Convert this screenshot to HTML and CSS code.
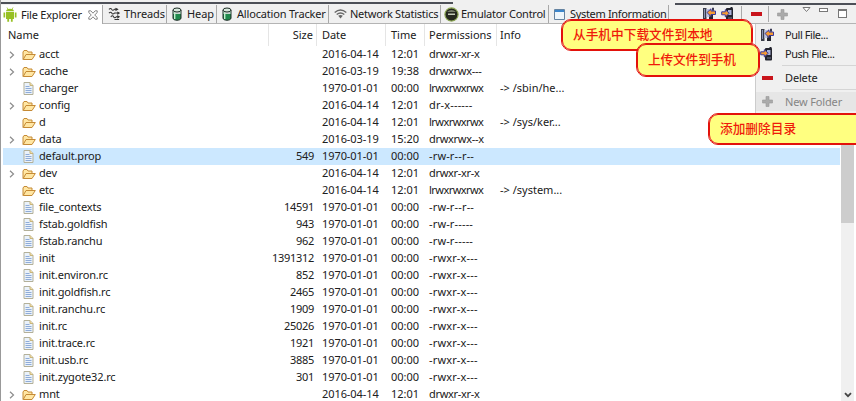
FILE: index.html
```
<!DOCTYPE html>
<html lang="zh-CN">
<head>
<meta charset="utf-8">
<title>File Explorer</title>
<link rel="stylesheet" href="styles.css">
</head>
<body>
<svg class="defs" width="0" height="0">
  <symbol id="folder" viewBox="0 0 14 12"><path d="M1 10.500V3l1-1.500h3L6 3h4v2.500M1.200 10.500 4 5.500h9.300L10 10.500z" fill="#ffe6a3" stroke="#c58a35"/></symbol>
  <symbol id="file" viewBox="0 0 11 13"><path d="M1 .5h6l3 3v9H1z" fill="#eaf2fb" stroke="#b3b099"/><path d="M7 .5v3h3" fill="#f4dfa5" stroke="#c7b47b"/><path d="M2.500 4.500h4M2.500 6.500h6M2.500 8.500h6M2.500 10.500h6" stroke="#8facd8"/></symbol>
  <symbol id="chev" viewBox="0 0 6 8"><path d="M1 .8 4.500 4 1 7.200" fill="none" stroke="#8c8c8c" stroke-width="1.200"/></symbol>
  <symbol id="heap" viewBox="0 0 10 14"><path d="M1 3v8c0 3 8 3 8 0V3z" fill="#1f8a4c" stroke="#1c2b24"/><path d="M1.500 4v3h7V4z" fill="#c9d6cf"/><path d="M2.700 4v8" stroke="#c5f0d0" stroke-width="1.400"/><ellipse cx="5" cy="3" rx="4" ry="2" fill="#d6e8dc" stroke="#1c2b24"/></symbol>
  <symbol id="pull" viewBox="0 0 15 14"><path d="M1 1h3.500v12H1z" fill="#3a3d4a"/><path d="M7 5h4v8H7z" fill="#23242e"/><path d="M4.500 2h3v8h-3z" fill="#bcc4e6"/><path d="M2.500 2v9" stroke="#8b93b5"/><path d="M10 .8h2v3h-2z" fill="#3b3b55"/><path d="M5 5.500 9 1.800v2.200h4.500v3.500H9v2z" fill="#f59b32" stroke="#3c3a9b"/></symbol>
  <symbol id="push" viewBox="0 0 13 14"><rect x="5" y="1" width="7" height="12.500" rx="1" fill="#23242e"/><path d="M10.500 0v3" stroke="#23242e" stroke-width="2"/><path d="M7 3h3.500v5H7z" fill="#aab2d9"/><path d="M7 11h4" stroke="#777b93"/><path d="M.7 4.800h3.600V2.600L8.300 6.300l-4 3.700V7.800H.7z" fill="#f59b32" stroke="#3c3a9b"/></symbol>
  <symbol id="plus" viewBox="0 0 11 11"><path d="M4 .5h3V4h3.500v3H7v3.500H4V7H.5V4H4z" fill="#aaa" stroke="#999" stroke-width=".6"/></symbol>
</svg>
<div class="window">
  <div class="topedge"><i></i><i></i></div>
  <div class="tabbar">
    <div class="tab active t1"><svg class="android" viewBox="0 0 14 15"><path d="M3 5h8v7H3zM3 4.300C3 1 11 1 11 4.300zM.5 5.500h1.700v5H.5zM11.800 5.500h1.700v5h-1.700zM4.300 12h1.800v2.800H4.300zM7.900 12h1.800v2.800H7.900z" fill="#97c024"/><path d="M4 .5 5.200 2.500M10 .5 8.800 2.500" stroke="#97c024" stroke-width=".8"/></svg><span>File Explorer</span><svg class="close" viewBox="0 0 10 10"><path d="M.8.800h2L5 3.200 7.200.800h2v1.800L6.700 5l2.500 2.400v1.800h-2L5 6.800 2.800 9.200h-2V7.400L3.300 5 .8 2.600z" fill="#fff" stroke="#777" stroke-width=".9"/></svg></div>
    <div class="tab t2"><svg class="threads" viewBox="0 0 14 14"><path d="M1 2q2-2 3 0t3 0h3M1 6q2-2 3 0t3 0h5M3 10q2-2 3 0t3 0h3M7 13h5" fill="none" stroke="#333" stroke-width="1.100"/><path d="M8 .2 11.500 2 8 4zM10 4.200 13 6l-3 2zM10 8.200l3 1.800-3 2z" fill="#333"/></svg><span>Threads</span></div>
    <div class="tab t3"><svg class="heap"><use href="#heap"/></svg><span>Heap</span></div>
    <div class="tab t4"><svg class="heap"><use href="#heap"/></svg><span>Allocation Tracker</span></div>
    <div class="tab t5"><svg class="wifi" viewBox="0 0 13 10"><path d="M.7 3.500Q6.500-1.500 12.300 3.500M2.700 5.500q3.800-3.200 7.600 0" fill="none" stroke="#666" stroke-width="1.400"/><path d="M4.200 6.800Q6.500 5 8.800 6.800L6.500 9.500z" fill="#666"/></svg><span>Network Statistics</span></div>
    <div class="tab t6"><svg class="emu" viewBox="0 0 15 15"><circle cx="7.500" cy="7.500" r="6.600" fill="#25281f" stroke="#8ca653" stroke-width="1.200"/><path d="M3 5q4.500-4 9 0z" fill="#777d6c"/><path d="M4 6.500h7v1.500H4z" fill="#c5cbb9"/></svg><span>Emulator Control</span></div>
    <div class="tab t7"><svg class="sys" viewBox="0 0 11 11"><path d="M.5.5h10v10H.5z" fill="#eef6fc" stroke="#6583a0"/><path d="M1 1h9v2H1z" fill="#3c86cc"/></svg><span>System Information</span></div>
    <div class="tools">
      <svg class="pull"><use href="#pull"/></svg><svg class="push"><use href="#push"/></svg><i class="sep"></i><i class="minus"></i><i class="sep"></i><svg class="plus"><use href="#plus"/></svg>
      <svg class="wintri" viewBox="0 0 9 6"><path d="M1 .5h7L4.500 4.500z" fill="#fff" stroke="#777"/></svg><i class="winmin"></i><i class="winmax"></i>
    </div>
  </div>
  <div class="body">
    <div class="table" id="table">
      <div class="row head"><span class="name">Name</span><span class="size">Size</span><span class="date">Date</span><span class="time">Time</span><span class="perm">Permissions</span><span class="info">Info</span></div>
    </div>
    <div class="scroll"><i class="thumb"></i><svg class="down" viewBox="0 0 8 6"><path d="M1 1.200 4 4.200l3-3" fill="none" stroke="#444" stroke-width="1.800"/></svg></div>
  </div>
</div>
<div class="menu">
  <div class="item tight"><svg class="pull"><use href="#pull"/></svg><span>Pull File...</span></div>
  <div class="item tight"><svg class="push"><use href="#push"/></svg><span>Push File...</span></div>
  <hr>
  <div class="item del"><i class="minus"></i><span>Delete</span></div>
  <hr>
  <div class="item disabled"><svg class="plus"><use href="#plus"/></svg><span>New Folder</span></div>
</div>
<div class="note n1">从手机中下载文件到本地</div>
<div class="note n2">上传文件到手机</div>
<div class="note n3">添加删除目录</div>
<script src="rows.js"></script>
</body>
</html>
```
FILE: rows.js
```
const A = "2016-04-14", B = "2016-03-19", C = "1970-01-01";
// kind: "D" expandable folder, "d" plain folder, "f" file
const rows = [
  ["D", "acct", "", A, "12:01", "drwxr-xr-x", ""],
  ["D", "cache", "", B, "19:38", "drwxrwx---", ""],
  ["f", "charger", "", C, "00:00", "lrwxrwxrwx", "-> /sbin/he..."],
  ["D", "config", "", A, "12:01", "dr-x------", ""],
  ["d", "d", "", A, "12:01", "lrwxrwxrwx", "-> /sys/ker..."],
  ["D", "data", "", B, "15:20", "drwxrwx--x", ""],
  ["f", "default.prop", "549", C, "00:00", "-rw-r--r--", ""],
  ["D", "dev", "", A, "12:01", "drwxr-xr-x", ""],
  ["d", "etc", "", A, "12:01", "lrwxrwxrwx", "-> /system..."],
  ["f", "file_contexts", "14591", C, "00:00", "-rw-r--r--", ""],
  ["f", "fstab.goldfish", "943", C, "00:00", "-rw-r-----", ""],
  ["f", "fstab.ranchu", "962", C, "00:00", "-rw-r-----", ""],
  ["f", "init", "1391312", C, "00:00", "-rwxr-x---", ""],
  ["f", "init.environ.rc", "852", C, "00:00", "-rwxr-x---", ""],
  ["f", "init.goldfish.rc", "2465", C, "00:00", "-rwxr-x---", ""],
  ["f", "init.ranchu.rc", "1909", C, "00:00", "-rwxr-x---", ""],
  ["f", "init.rc", "25026", C, "00:00", "-rwxr-x---", ""],
  ["f", "init.trace.rc", "1921", C, "00:00", "-rwxr-x---", ""],
  ["f", "init.usb.rc", "3885", C, "00:00", "-rwxr-x---", ""],
  ["f", "init.zygote32.rc", "301", C, "00:00", "-rwxr-x---", ""],
  ["D", "mnt", "", A, "12:01", "drwxr-xr-x", ""]
];
const table = document.getElementById("table");
for (const [kind, name, size, date, time, perm, info] of rows) {
  const row = document.createElement("div");
  row.className = "row" + (name === "default.prop" ? " selected" : "");
  const chev = kind === "D" ? '<svg class="chev"><use href="#chev"/></svg>' : "";
  const icon = kind === "f" ? "file" : "folder";
  const type = perm[0] === "l" ? "link" : perm.startsWith("drwx") ? "dir" : "plain";
  row.innerHTML = `<span class="name"><b class="twisty">${chev}</b><b class="icon"><svg class="${icon}"><use href="#${icon}"/></svg></b><span class="label">${name}</span></span>` +
    `<span class="size">${size}</span><span class="date">${date}</span><span class="time">${time}</span><span class="perm ${type}">${perm}</span><span class="info">${info.replace(">", "&gt;")}</span>`;
  table.append(row);
}
```
FILE: styles.css
```
* { box-sizing: border-box; }
body { margin: 0; width: 856px; height: 401px; overflow: hidden; position: relative; background: #fff; color: #202020; font: 11px/16px "Noto Sans", "Noto Sans CJK SC", sans-serif; }
svg { display: block; flex: none; }
.defs { position: absolute; }
.window { height: 401px; display: flex; flex-direction: column; border-left: 1px solid #999; }
.topedge { height: 5px; flex: none; background: #f0f0f0; display: flex; justify-content: space-between; padding-top: 2px; }
.topedge i { height: 2px; background: #4c4f57; width: 452px; }
.topedge i + i { width: 181px; margin-top: 1px; }
.tabbar { height: 19px; flex: none; display: flex; background: #f0f0f0; border-bottom: 1px solid #b4b4b4; }
.tab { display: flex; align-items: center; flex: none; border-right: 1px solid #a8a8a8; white-space: nowrap; height: 18px; padding-left: 5px; letter-spacing: -.1px; }
.tab span { line-height: 18px; height: 18px; }
.active { background: #fff; height: 19px; }
.t1 { width: 102px; padding-left: 2px; letter-spacing: -.22px; } .t2 { width: 64px; } .t3 { width: 50px; } .t4 { width: 112px; letter-spacing: -.18px; } .t5 { width: 112px; letter-spacing: -.25px; } .t6 { width: 108px; padding-left: 3px; letter-spacing: -.25px; } .t7 { width: 120px; letter-spacing: -.33px; }
.android { width: 14px; height: 15px; margin-right: 4px; }
.close { width: 10px; height: 10px; margin-left: 6px; }
.threads { width: 13px; height: 14px; margin-right: 3px; }
.heap { width: 10px; height: 14px; margin-right: 5px; }
.wifi { width: 13px; height: 10px; margin-right: 3px; }
.emu { width: 15px; height: 15px; margin-right: 2px; }
.sys { width: 11px; height: 11px; margin-right: 5px; }
.tools { flex: 1; display: flex; align-items: center; padding-left: 33px; }
.pull { width: 15px; height: 14px; } .push { width: 13px; height: 14px; }
.tools .push { margin-left: 4px; }
.sep { width: 1px; height: 16px; background: #aaa; margin-left: 7px; }
.minus { width: 11px; height: 4px; background: #c9141b; flex: none; }
.tools .minus { margin: 0 0 0 9px; }
.tools .minus + .sep { margin-left: 6px; }
.plus { width: 11px; height: 11px; } .tools .plus { margin-left: 8px; }
.wintri { width: 9px; height: 6px; margin: -8px 0 0 14px; }
.winmin { width: 9px; height: 4px; border: 1px solid #777; background: #fff; margin: -8px 0 0 8px; }
.winmax { width: 9px; height: 9px; border: 1px solid #777; border-top-width: 2px; background: #fff; margin: -1px 0 0 10px; }
.body { flex: 1; min-height: 0; display: flex; }
.table { flex: 1; overflow: hidden; }
.row { display: grid; grid-template-columns: 266px 48px 69px 39px 72px 1fr; height: 17px; margin: 0 1px 0 2px; white-space: nowrap; }
.row > span { height: 17px; }
.head { height: 22px; line-height: 22px; }
.head > span { height: 22px; border-right: 1px solid #e5e5e5; }
.head .info { border-right: 0; }
.head .name { padding-left: 5px; }
.head .size { letter-spacing: 0; }
.selected { background: #cce8ff; }
.name { display: flex; align-items: center; }
.label { height: 17px; letter-spacing: -.15px; }
.twisty { width: 19px; padding-left: 6px; } .chev { width: 6px; height: 8px; }
.icon { width: 17px; display: flex; }
.folder { width: 14px; height: 12px; } .file { width: 11px; height: 13px; margin-left: 1px; }
.size { text-align: right; padding-right: 3px; letter-spacing: -.3px; }
.date { padding-left: 5px; letter-spacing: -.08px; } .time { padding-left: 5px; } .perm { padding-left: 4px; } .info { padding-left: 3px; }
.link { letter-spacing: -.55px; } .dir { letter-spacing: -.3px; } .plain { letter-spacing: .15px; }
.scroll { width: 13px; margin-right: 2px; background: #f0f0f0; display: flex; flex-direction: column; justify-content: space-between; align-items: center; padding-bottom: 3px; }
.thumb { width: 13px; height: 80px; margin-top: 119px; background: #cdcdcd; }
.down { width: 8px; height: 6px; }
.menu { position: absolute; left: 755px; top: 24px; width: 101px; height: 91px; background: #f0f0f0; border-left: 1px solid #ccc; padding-top: 1px; }
.item { display: flex; align-items: center; height: 19px; padding-left: 4px; letter-spacing: -.15px; }
.tight { letter-spacing: -.45px; }
.item span { margin-left: auto; width: 71px; }
.item .minus { margin-left: 2px; }
.item .plus { margin-left: 2px; }
.menu hr { margin: 2px 0 2px 26px; border: 0; height: 1px; background: #d5d5d5; }
.disabled { background: #e6e6e6; color: #858585; }
.note { position: absolute; border: 1.500px solid #e3120b; border-radius: 9px; background: #ffff80; color: #ef1a0a; font: 500 12.700px/26px "Noto Sans CJK SC", sans-serif; white-space: nowrap; outline: .5px solid #e3120b; }
.n1 { left: 562px; top: 20px; width: 190px; height: 30px; padding-left: 10px; }
.n2 { left: 637px; top: 44px; width: 122px; height: 32px; padding-left: 10px; line-height: 27px; letter-spacing: -.15px; }
.n3 { left: 709px; top: 114px; width: 157px; height: 30px; padding-left: 10px; }
```
